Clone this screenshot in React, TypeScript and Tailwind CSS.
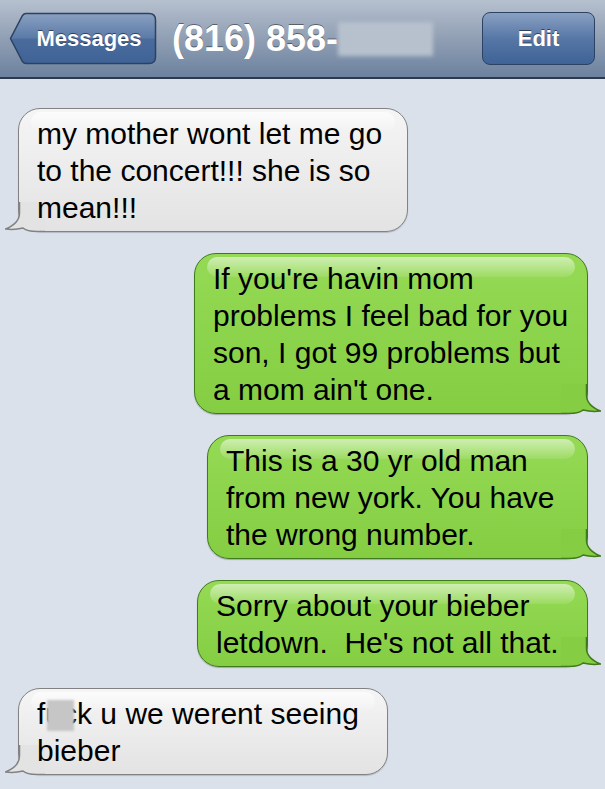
import type { ReactNode } from 'react';

type Side = 'left' | 'right';

function Tail({ side }: { side: Side }) {
  const gray = side === 'left';
  const outline = 'M14.5 0 L14.5 11 C14.5 19 8 24 0.5 27 C8 28 14 27 18 26 C21 28.5 25 29.5 32 29.5 L40 29.5';
  return (
    <svg
      width="40"
      height="30"
      viewBox="0 0 40 30"
      className={`absolute bottom-[-1px] ${gray ? 'left-[-14px]' : 'right-[-14px] scale-x-[-1]'}`}
    >
      <path d={outline + ' L40 0 Z'} fill={gray ? '#e3e3e3' : '#85cd42'} />
      <path d={outline} fill="none" stroke={gray ? '#828282' : '#3f7a1c'} strokeWidth="1.5" />
    </svg>
  );
}

function Bubble({ side, width, lines }: { side: Side; width: string; lines: ReactNode[] }) {
  const gray = side === 'left';
  return (
    <div
      className={`relative ${width} rounded-[22px] border pt-[6px] pb-[5px] pl-[18px] ${
        gray
          ? 'self-start border-[#828282] bg-gradient-to-b from-[#f5f5f5] to-[#e3e3e3] shadow-[0_1px_1px_rgba(0,0,0,0.18)]'
          : 'self-end border-[#3f7a1c] bg-gradient-to-b from-[#95da55] via-[#8cd44b] to-[#85cd42] shadow-[0_1px_1px_rgba(0,0,0,0.25)]'
      }`}
    >
      <Tail side={side} />
      <div
        className={`absolute top-[3px] left-[12px] right-[12px] h-[20px] rounded-full bg-gradient-to-b ${
          gray ? 'from-white/70 to-white/0' : 'from-white/55 to-white/10'
        }`}
      />
      <div className="relative font-['Liberation_Sans',Arial,sans-serif] text-[30px] leading-[37px] text-black">
        {lines.map((l, i) => (
          <div key={i} className="whitespace-pre">
            {l}
          </div>
        ))}
      </div>
    </div>
  );
}

function BackButton() {
  return (
    <div className="relative w-[148px] h-[53px] flex items-center justify-center pl-[12px]">
      <svg width="148" height="53" viewBox="0 0 148 53" className="absolute inset-0">
        <defs>
          <linearGradient id="bb" x1="0" y1="0" x2="0" y2="1">
            <stop offset="0" stopColor="#8aa0c2" />
            <stop offset="0.48" stopColor="#5c7ba8" />
            <stop offset="0.52" stopColor="#4a6b9c" />
            <stop offset="1" stopColor="#3f6397" />
          </linearGradient>
        </defs>
        <path
          d="M17 1.5 L140 1.5 Q146.5 1.5 146.5 8 L146.5 45 Q146.5 51.5 140 51.5 L17 51.5 Q15 51.5 13.5 49.5 L1.5 26.5 L13.5 3.5 Q15 1.5 17 1.5 Z"
          fill="url(#bb)"
          stroke="#2c4262"
          strokeWidth="1.5"
        />
      </svg>
      <span className="relative text-[22px] font-bold text-white [text-shadow:0_-1px_0_rgba(0,0,0,0.5)]">
        Messages
      </span>
    </div>
  );
}

export default function App() {
  return (
    <div className="w-[605px] h-[789px] overflow-hidden bg-[#dae1eb] font-['Liberation_Sans',Arial,sans-serif]">
      <header className="h-[79px] border-b-2 border-[#2c394a] bg-gradient-to-b from-[#b6c1cf] via-[#919fb4] to-[#6c829f] flex items-center pl-[9px] pr-[10px]">
        <BackButton />
        <div className="ml-[15px] flex items-center">
          <span className="text-[36px] font-bold text-white [text-shadow:0_-1px_0_rgba(0,0,0,0.45)]">
            (816) 858-
          </span>
          <div className="w-[95px] h-[34px] bg-[#b7c1ce] blur-[2px]" />
        </div>
        <div className="ml-auto w-[113px] h-[53px] rounded-[8px] border-[1.5px] border-[#2c4262] bg-gradient-to-b from-[#8aa0c2] via-[#5677a6] to-[#3f6397] flex items-center justify-center">
          <span className="text-[22px] font-bold text-white [text-shadow:0_-1px_0_rgba(0,0,0,0.5)]">Edit</span>
        </div>
      </header>

      <main className="flex flex-col gap-[21px] pt-[29px] pl-[18px] pr-[17px]">
        <Bubble
          side="left"
          width="w-[390px]"
          lines={['my mother wont let me go', 'to the concert!!! she is so', 'mean!!!']}
        />
        <Bubble
          side="right"
          width="w-[394px]"
          lines={["If you're havin mom", 'problems I feel bad for you', 'son, I got 99 problems but', "a mom ain't one."]}
        />
        <Bubble
          side="right"
          width="w-[381px]"
          lines={['This is a 30 yr old man', 'from new york. You have', 'the wrong number.']}
        />
        <Bubble
          side="right"
          width="w-[391px]"
          lines={['Sorry about your bieber', "letdown.  He's not all that."]}
        />
        <Bubble
          side="left"
          width="w-[370px]"
          lines={[
            <>
              f
              <span className="relative">
                uc
                <span className="absolute left-[2px] top-[3px] w-[27px] h-[31px] bg-[#c6c6c6] blur-[1px]" />
              </span>
              k u we werent seeing
            </>,
            'bieber',
          ]}
        />
      </main>
    </div>
  );
}
